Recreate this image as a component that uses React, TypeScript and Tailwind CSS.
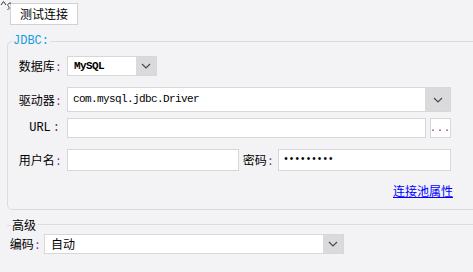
import { ReactNode } from 'react';

const cjk = "font-['Noto_Sans_CJK_SC','Noto_Sans',sans-serif]";
const mono = "font-['Liberation_Mono','DejaVu_Sans_Mono',monospace]";

function Chevron() {
  return (
    <svg width="10" height="6" viewBox="0 0 10 6" fill="none">
      <path d="M1 1 L5 5 L9 1" stroke="#4a4a4a" strokeWidth="1.2" />
    </svg>
  );
}

function Label({ text, className }: { text: string; className: string }) {
  return (
    <span className={`flex shrink-0 items-center justify-end whitespace-nowrap text-[12px] leading-[14px] text-black ${className}`}>
      {text}
      <span className="ml-[2px] text-[#7a2a7a]">:</span>
    </span>
  );
}

function Combo({ children, className, btn }: { children: ReactNode; className: string; btn: string }) {
  return (
    <div className={`flex border border-[#d7d7d9] bg-white ${className}`}>
      <div className="flex flex-1 items-center overflow-hidden">{children}</div>
      <div className={`flex items-center justify-center bg-[#dadadd] ${btn}`}>
        <Chevron />
      </div>
    </div>
  );
}

export default function App() {
  return (
    <div className={`relative h-[272px] w-[473px] overflow-hidden bg-[#f3f3f5] ${cjk}`}>
      <svg className="absolute left-0 top-0" width="14" height="11" viewBox="0 0 14 11" fill="none">
        <path d="M1 5 L3.5 1.5 L6 5" stroke="#333" strokeWidth="1" />
        <path d="M11 3 C8 3 7 5 8.5 6.5 C10 8 9 9.5 7.5 9.5" stroke="#333" strokeWidth="1" />
      </svg>

      <div className="pl-[10px] pt-[3px]">
        <button className="flex h-[22px] w-[68px] items-center justify-center border border-[#d2d2d4] bg-white text-[12px] text-black">
          测试连接
        </button>
      </div>

      <fieldset className="ml-[7px] mt-[9px] w-[520px] rounded-[5px] border border-[#dcdcde] px-0 pb-[11px]">
        <legend className={`ml-[4px] px-[1px] text-[12px] leading-[14px] text-[#1a9be0] ${mono}`}>JDBC:</legend>
        <div className="w-[446px] pt-[8px]">
          <div className="flex h-[20px]">
            <Label text="数据库" className="w-[59px] pr-[7px]" />
            <Combo className="w-[90px]" btn="w-[20px]">
              <span className={`pl-[6px] text-[11px] font-bold tracking-[-0.6px] text-black ${mono}`}>MySQL</span>
            </Combo>
          </div>

          <div className="mt-[11px] flex h-[25px]">
            <Label text="驱动器" className="w-[59px] pr-[7px]" />
            <Combo className="w-[384px]" btn="w-[25px]">
              <span className={`pl-[5px] text-[11px] tracking-[-0.6px] text-black ${mono}`}>com.mysql.jdbc.Driver</span>
            </Combo>
          </div>

          <div className="mt-[6px] flex h-[20px]">
            <Label text="URL" className={`w-[59px] pr-[7px] ${mono}`} />
            <div className="w-[359px] border border-[#d7d7d9] bg-white" />
            <div className="ml-[4px] flex w-[21px] items-end justify-center border border-[#d7d7d9] bg-white pb-[3px]">
              <span className={`text-[10px] leading-[10px] tracking-[1px] text-[#7a2a7a] ${mono}`}>...</span>
            </div>
          </div>

          <div className="mt-[11px] flex h-[22px]">
            <Label text="用户名" className="w-[59px] pr-[7px]" />
            <div className="w-[172px] border border-[#d7d7d9] bg-white" />
            <Label text="密码" className="w-[39px] pr-[6px]" />
            <div className="flex w-[173px] items-center border border-[#d7d7d9] bg-white pl-[4px]">
              <span className={`text-[10px] leading-[10px] tracking-[-0.4px] text-black ${mono}`}>
                •••••••••
              </span>
            </div>
          </div>

          <div className="mt-[13px] flex justify-end pr-[1px]">
            <a href="#" className="text-[12px] leading-[14px] text-[#0000ff] underline">
              连接池属性
            </a>
          </div>
        </div>
      </fieldset>

      <div className="mt-[8px] flex h-[14px] items-center">
        <div className="ml-[7px] h-px w-[4px] bg-[#dcdcde]" />
        <span className="px-[1px] text-[12px] leading-[14px] text-black">高级</span>
        <div className="mt-[-1px] h-px flex-1 bg-[#dcdcde]" />
      </div>

      <div className="mt-[2px] flex h-[20px] pl-[10px]">
        <Label text="编码" className="w-[34px] pr-[5px]" />
        <Combo className="w-[300px]" btn="w-[20px]">
          <span className="pl-[6px] text-[12px] text-black">自动</span>
        </Combo>
      </div>
    </div>
  );
}
